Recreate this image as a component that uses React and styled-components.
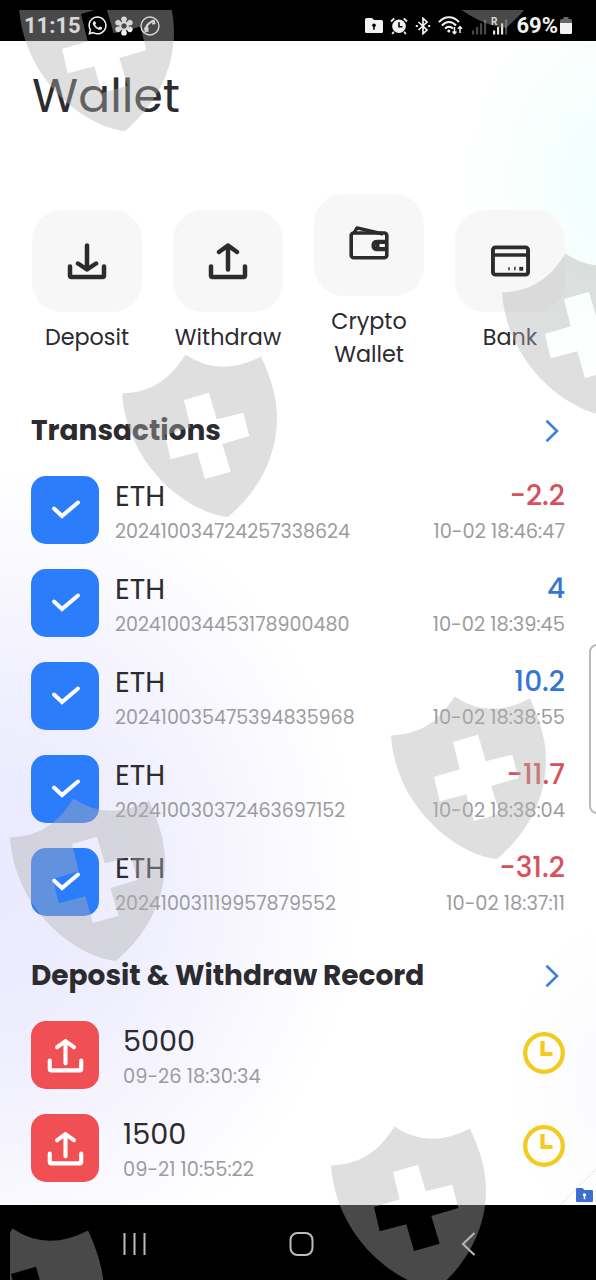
import React from 'react';
import styled, { createGlobalStyle } from 'styled-components';
import { FaWhatsapp } from 'react-icons/fa';

const GlobalStyle = createGlobalStyle`
  *, *::before, *::after {
    box-sizing: border-box;
  }

  html, body {
    margin: 0;
    padding: 0;
    overflow: hidden;
  }

  body {
    font-family: Poppins, Inter, 'Noto Sans', sans-serif;
    color: #2b2b30;
  }

  svg {
    display: block;
    flex: none;
  }
`;

const transactions = [
  { id: '202410034724257338624', amount: '-2.2', time: '10-02 18:46:47' },
  { id: '202410034453178900480', amount: '4', time: '10-02 18:39:45' },
  { id: '202410035475394835968', amount: '10.2', time: '10-02 18:38:55' },
  { id: '202410030372463697152', amount: '-11.7', time: '10-02 18:38:04' },
  { id: '202410031119957879552', amount: '-31.2', time: '10-02 18:37:11' },
];

const records = [
  { amount: '5000', time: '09-26 18:30:34' },
  { amount: '1500', time: '09-21 10:55:22' },
];

const shields = [
  [19, -36],
  [400, -139],
  [502, 249],
  [122, 350],
  [391, 692],
  [10, 794],
  [331, 1122],
  [-51, 1224],
];

const Screen = styled.div`
  position: relative;
  display: flex;
  flex-direction: column;
  width: 596px;
  height: 1280px;
  overflow: hidden;
  background:
    radial-gradient(ellipse 150px 200px at 610px 180px, #f0fffc 0%, rgba(240, 255, 252, 0) 100%),
    radial-gradient(ellipse 380px 410px at -20px 880px, #e9e8ff 0%, #f0effe 45%, rgba(255, 255, 255, 0) 100%),
    radial-gradient(ellipse 100px 160px at 610px 1080px, #fafafd 0%, rgba(255, 255, 255, 0) 100%),
    #fff;
`;

const StatusBar = styled.header`
  display: flex;
  flex: none;
  align-items: center;
  justify-content: space-between;
  height: 41px;
  padding: 10px 24px 0;
  background: #000;
  color: #f2f2f2;
  font-family: Roboto, sans-serif;
  font-size: 22px;
  font-weight: 700;
  line-height: 31px;
`;

const StatusGroup = styled.div`
  display: flex;
  align-items: center;
  gap: ${props => props.$gap}px;
`;

const Content = styled.main`
  flex: 1;
  min-height: 0;
  padding: 0 31px;
`;

const Title = styled.h1`
  margin: 29px 0 0 1px;
  font-size: 47.3px;
  font-weight: 400;
  line-height: 52px;
`;

const Actions = styled.nav`
  display: flex;
  align-items: center;
  justify-content: space-between;
  height: 178px;
  margin: 71px 0 0 1px;
`;

const Action = styled.div`
  display: flex;
  flex-direction: column;
  align-items: center;
  width: 110px;
`;

const Tile = styled.div`
  display: flex;
  align-items: center;
  justify-content: center;
  width: 110px;
  height: 102px;
  margin-bottom: 9px;
  border-radius: 30px;
  background: #f7f7f7;
`;

const ActionLabel = styled.span`
  display: flex;
  justify-content: center;
  width: 90px;
  font-size: 22.3px;
  line-height: 33px;
  text-align: center;
`;

const SectionHead = styled.div`
  display: flex;
  align-items: center;
  justify-content: space-between;
  height: 40px;
  margin-top: ${props => props.$top}px;
  padding-right: 6px;
`;

const SectionTitle = styled.h2`
  margin: 0;
  font-size: 28px;
  font-weight: 700;
  line-height: 40px;
`;

const List = styled.div`
  padding-top: 25px;
`;

const Row = styled.div`
  display: flex;
  height: 93px;
`;

const Badge = styled.div`
  display: flex;
  align-items: center;
  justify-content: center;
  flex: none;
  width: 68px;
  height: 68px;
  margin-right: ${props => props.$gap}px;
  border-radius: 15px;
  background: ${props => props.$color};
`;

const Cell = styled.div`
  display: flex;
  flex-direction: column;
  align-items: ${props => (props.$end ? 'flex-end' : 'flex-start')};
  margin-left: ${props => (props.$end ? 'auto' : 0)};
  padding-top: 1px;
`;

const Name = styled.div`
  font-size: 28.7px;
  line-height: 38px;
`;

const Amount = styled(Name)`
  font-size: 28px;
  font-weight: 500;
  color: ${props => (props.$negative ? '#d9505a' : '#3576d4')};
`;

const Detail = styled.div`
  font-size: ${props => (props.$time ? 19.4 : 19.05)}px;
  line-height: 33px;
  color: #9c9c9f;
`;

const Pending = styled.div`
  margin: 11px 0 0 auto;
`;

const NavBar = styled.footer`
  display: flex;
  flex: none;
  justify-content: space-between;
  height: 75px;
  padding: 27px 120px 0 122px;
  background: #000;
`;

const HomeIcon = styled.svg`
  margin-right: 6px;
`;

const EdgeHandle = styled.div`
  position: absolute;
  top: 644px;
  right: -10px;
  width: 17px;
  height: 170px;
  border: 2px solid #b9b9b9;
  border-radius: 8px;
  background: #fff;
`;

const CornerFold = styled.div`
  position: absolute;
  right: 0;
  bottom: 75px;
`;

const ShieldLayer = styled.svg`
  position: absolute;
  top: 0;
  left: 0;
  pointer-events: none;
`;

const FlowerIcon = () => (
  <svg width="20" height="22" viewBox="-10.5 -11 21 22" fill="#f2f2f2">
    {[0, 60, 120, 180, 240, 300].map(angle => (
      <path key={angle} transform={`rotate(${angle})`} d="M-1.5 -3L-3 -7Q-3 -10 0 -10Q3 -10 3 -7L1.5 -3Z" />
    ))}
    <circle r="3.8" fill="none" stroke="#f2f2f2" strokeWidth="2" />
  </svg>
);

const CallIcon = () => (
  <svg width="20" height="20" viewBox="0 0 20 20" fill="none" stroke="#f2f2f2">
    <circle cx="10" cy="10" r="9" strokeWidth="1.4" />
    <path d="M13.8 5.2C9 6.2 6 9.5 5.8 14.2" strokeWidth="2" />
    <path d="M11.3 5.3L13.9 4.5L14.6 7.4L12.2 8M5 12.4L7.6 12L7.8 14.8L5.4 15.4Z" strokeWidth="1.6" />
  </svg>
);

const FolderIcon = ({ color = '#f2f2f2', hole = '#000', width = 18 }) => (
  <svg width={width} height={width * 0.84} viewBox="0 0 18 15">
    <path fill={color} d="M1.5 0H7L9 2H16.5Q18 2 18 3.5V13.5Q18 15 16.5 15H1.5Q0 15 0 13.5V1.5Q0 0 1.5 0Z" />
    <circle cx="9" cy="7.2" r="1.8" fill={hole} />
    <path d="M8.2 7.5H9.8V11.8H8.2Z" fill={hole} />
  </svg>
);

const AlarmIcon = () => (
  <svg width="18" height="18" viewBox="0 0 18 18" fill="none">
    <circle cx="9" cy="9.3" r="6.8" fill="#f2f2f2" />
    <path d="M1 4.5L4.3 1.4M17 4.5L13.7 1.4M3.8 14.8L2.2 17M14.2 14.8L15.8 17" stroke="#f2f2f2" strokeWidth="1.8" />
    <path d="M9 5.3V9.8H12.5" stroke="#000" strokeWidth="1.6" />
  </svg>
);

const BluetoothIcon = () => (
  <svg width="16" height="18" viewBox="0 0 16 18" fill="none" stroke="#f2f2f2" strokeWidth="1.7">
    <path d="M3.5 5L12 13L8 16.7V1.3L12 5L3.5 13" />
    <path d="M0.8 9H2.8M13.2 9H15.2" strokeWidth="2" />
  </svg>
);

const WifiIcon = () => (
  <svg width="25" height="19" viewBox="0 0 25 19" fill="none" stroke="#f2f2f2">
    <path d="M1 6.2C6.5 -0.4 15.5 -0.4 21 6.2M4 9.5C8 4.8 14 4.8 18 9.5M7 12.7C9.3 10 12.7 10 15 12.7" strokeWidth="2" />
    <circle cx="10.8" cy="15" r="1.5" fill="#f2f2f2" stroke="none" />
    <path d="M16.5 11V17.5M14.5 15.5L16.5 17.7L18.5 15.5M22 17V10.7M20 12.7L22 10.5L24 12.7" strokeWidth="1.5" />
  </svg>
);

const SignalIcon = ({ roaming }) => (
  <svg width="18" height="20" viewBox="0 0 18 20">
    {[0, 1, 2, 3].map(i => (
      <rect
        key={i}
        x={2 + i * 4}
        y={14.5 - i * 3.6}
        width="2.2"
        height={4 + i * 3.6}
        fill={roaming && i < 3 ? '#e6e6e6' : '#484848'}
      />
    ))}
    {roaming && (
      <>
        <rect width="8" height="10" fill="#000" />
        <text x="0" y="8.5" fontSize="10" fontWeight="700" fill="#f2f2f2">R</text>
      </>
    )}
  </svg>
);

const BatteryIcon = () => (
  <svg width="12" height="17" viewBox="0 0 12 17">
    <path fill="#666" d="M3.5 0H8.5V2H10.5Q12 2 12 4V7H0V4Q0 2 1.5 2H3.5Z" />
    <path fill="#f2f2f2" d="M0 6H12V15.5Q12 17 10.5 17H1.5Q0 17 0 15.5Z" />
  </svg>
);

const TransferIcon = ({ up, color = '#2c2c2f', size = 40 }) => (
  <svg
    width={size}
    height={size}
    viewBox="0 0 40 40"
    fill="none"
    stroke={color}
    strokeWidth="4.5"
    strokeLinecap="round"
    strokeLinejoin="round"
  >
    <path d="M3 25.5V34.5Q3 36 4.5 36H35.5Q37 36 37 34.5V25.5" />
    <path d={up ? 'M20 28.5V4.5M11 11L20 4.5L29 11' : 'M20 4.5V28.5M11 22.5L20 28.5L29 22.5'} />
  </svg>
);

const WalletIcon = () => (
  <svg width="40" height="38" viewBox="0 0 40 38" fill="none" stroke="#2c2c2f" strokeWidth="3.6" strokeLinejoin="round">
    <rect x="2.2" y="7" width="35.6" height="24.8" rx="2.5" />
    <path d="M5 7L8 1.9L34 8" strokeWidth="3.4" />
    <path d="M37 15.8H28.5Q24.5 15.8 24.5 19.5T28.5 23.2H37" strokeWidth="4.2" />
    <path d="M27 19.5H30.5" strokeWidth="3.6" />
  </svg>
);

const CardIcon = () => (
  <svg width="39" height="32" viewBox="0 0 40 32" fill="none" stroke="#2c2c2f">
    <rect x="2" y="2" width="36" height="28" rx="2.5" strokeWidth="4" />
    <path d="M2 9.8H38" strokeWidth="3.6" />
    <path d="M18.5 25.5V22.5M24.5 25.5V22" strokeWidth="1.5" />
    <path d="M29 24H33" strokeWidth="4" />
  </svg>
);

const ChevronIcon = () => (
  <svg width="14" height="24" viewBox="0 0 14 24" fill="none" stroke="#3b82d4" strokeWidth="2.6">
    <path d="M1.5 1.8L12 12L1.5 22.2" />
  </svg>
);

const CheckIcon = () => (
  <svg width="32" height="24" viewBox="0 0 32 24" fill="none" stroke="#fff" strokeWidth="4" strokeLinecap="round">
    <path d="M5 10.5L13 18L29 4.5" />
  </svg>
);

const ClockIcon = () => (
  <svg width="42" height="42" viewBox="0 0 42 42" fill="none" stroke="#f2cb1d">
    <circle cx="21" cy="21" r="18.8" strokeWidth="4.2" />
    <path d="M19.5 9V22H29.5" strokeWidth="4.2" />
  </svg>
);

const actions = [
  { label: 'Deposit', icon: <TransferIcon /> },
  { label: 'Withdraw', icon: <TransferIcon up /> },
  { label: 'Crypto Wallet', icon: <WalletIcon /> },
  { label: 'Bank', icon: <CardIcon /> },
];

const App = () => (
  <Screen>
    <GlobalStyle />
    <StatusBar>
      <StatusGroup $gap={6}>
        <span>11:15</span>
        <FaWhatsapp size={21} />
        <FlowerIcon />
        <CallIcon />
      </StatusGroup>
      <StatusGroup $gap={7}>
        <FolderIcon />
        <AlarmIcon />
        <BluetoothIcon />
        <WifiIcon />
        <StatusGroup $gap={3}>
          <SignalIcon />
          <SignalIcon roaming />
        </StatusGroup>
        <StatusGroup $gap={2}>
          <span>69%</span>
          <BatteryIcon />
        </StatusGroup>
      </StatusGroup>
    </StatusBar>

    <Content>
      <Title>Wallet</Title>

      <Actions>
        {actions.map(({ label, icon }) => (
          <Action key={label}>
            <Tile>{icon}</Tile>
            <ActionLabel>{label}</ActionLabel>
          </Action>
        ))}
      </Actions>

      <SectionHead $top={40}>
        <SectionTitle>Transactions</SectionTitle>
        <ChevronIcon />
      </SectionHead>
      <List>
        {transactions.map(item => (
          <Row key={item.id}>
            <Badge $color="#2b7dfc" $gap={16}>
              <CheckIcon />
            </Badge>
            <Cell>
              <Name>ETH</Name>
              <Detail>{item.id}</Detail>
            </Cell>
            <Cell $end>
              <Amount $negative={item.amount.startsWith('-')}>{item.amount}</Amount>
              <Detail $time>{item.time}</Detail>
            </Cell>
          </Row>
        ))}
      </List>

      <SectionHead $top={15}>
        <SectionTitle>Deposit & Withdraw Record</SectionTitle>
        <ChevronIcon />
      </SectionHead>
      <List>
        {records.map(item => (
          <Row key={item.time}>
            <Badge $color="#f05053" $gap={24}>
              <TransferIcon up color="#fff" size={37} />
            </Badge>
            <Cell>
              <Name>{item.amount}</Name>
              <Detail $time>{item.time}</Detail>
            </Cell>
            <Pending>
              <ClockIcon />
            </Pending>
          </Row>
        ))}
      </List>
    </Content>

    <NavBar>
      <svg width="25" height="24" viewBox="0 0 25 24" stroke="#bdbdbd" strokeWidth="2">
        <path d="M2.5 1V23M12.5 1V23M22.5 1V23" />
      </svg>
      <HomeIcon width="25" height="24" viewBox="0 0 25 24" fill="none" stroke="#bdbdbd" strokeWidth="2">
        <rect x="1.5" y="1" width="22" height="22" rx="7" />
      </HomeIcon>
      <svg width="15" height="24" viewBox="0 0 15 24" fill="none" stroke="#bdbdbd" strokeWidth="2">
        <path d="M13.5 1L2 12L13.5 23" />
      </svg>
    </NavBar>

    <EdgeHandle />
    <CornerFold>
      <svg width="36" height="40" viewBox="0 0 36 40">
        <path d="M0 40L36 4" stroke="#e4e4e6" />
        <g transform="translate(16 23)">
          <FolderIcon color="#3d6fd0" hole="#fff" width={17} />
        </g>
      </svg>
    </CornerFold>

    <ShieldLayer width="596" height="1280" viewBox="0 0 596 1280">
      <defs>
        <clipPath id="inset">
          <rect x="10" y="10" width="586" height="1270" />
        </clipPath>
      </defs>
      <g clipPath="url(#inset)" fill="rgb(178, 178, 178)" fillOpacity="0.41" fillRule="evenodd">
        {shields.map(([x, y]) => (
          <path
            key={`${x} ${y}`}
            transform={`translate(${x} ${y})`}
            d="M0 43.5C28 42 46 32 63.5 4.5Q98 28 139 6.5C150 30 155 50 155 68C155 105 138 140 106 167C66 163 5 116 0 43.5ZM62 50L87 42.7L94.7 69.3L121.3 62.7L127.3 86L100.3 94L108.7 121.7L83 129L75.3 102.3L48.7 109.3L43 85L68.7 77.3Z"
          />
        ))}
      </g>
    </ShieldLayer>
  </Screen>
);

export default App;
